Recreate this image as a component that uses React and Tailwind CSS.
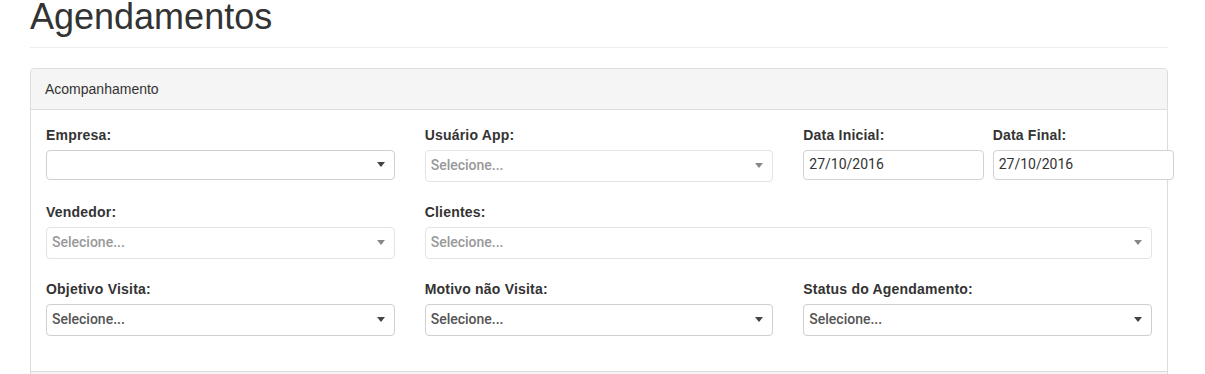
import React from "react";

const labelCls = "block mb-[5px] text-[14px] leading-[20px] font-bold tracking-[0.2px] text-[#333]";

function Caret({ light }) {
  return (
    <span
      className={
        "w-0 h-0 border-t-[5px] border-x-[4px] border-x-transparent " +
        (light ? "border-t-[#888]" : "border-t-[#444]")
      }
    />
  );
}

function Select({ placeholder, light, tall = true }) {
  return (
    <div
      className={
        "flex items-center justify-between pl-[5px] pr-[9px] bg-white border rounded-[4px] " +
        (tall ? "h-[32px] " : "h-[30px] ") +
        (light ? "border-[#e3e3e3]" : "border-[#cfcfcf]")
      }
    >
      <span
        className={
          "text-[14px] font-medium font-['Roboto',sans-serif] " +
          (light ? "text-[#999]" : "text-[#555]")
        }
      >
        {placeholder}
      </span>
      <Caret light={light} />
    </div>
  );
}

function DateInput({ value }) {
  return (
    <div className="relative z-10 flex items-center w-[181px] h-[30px] pl-[5px] bg-white border border-[#d2d2d2] rounded-[4px]">
      <span className="text-[14px] text-[#333] font-['Roboto',sans-serif]">{value}</span>
    </div>
  );
}

export default function App() {
  return (
    <div className="bg-white min-h-screen font-['Liberation_Sans',Arial,sans-serif] text-[#333]">
      <div className="ml-[30px] w-[1138px]">
        <h1 className="mt-[-3px] mb-[10px] text-[36px] leading-[1.1] font-normal text-[#333]">
          Agendamentos
        </h1>
        <hr className="border-0 border-t border-[#eee] mb-[20px]" />

        {/* Panel */}
        <div className="border border-[#ddd] rounded-[4px]">
          <div className="px-[14px] py-[10px] bg-[#f5f5f5] border-b border-[#ddd] rounded-t-[4px] text-[14px] leading-[20px]">
            Acompanhamento
          </div>

          <div className="p-[15px]">
            {/* Row 1 */}
            <div className="flex -mx-[15px]">
              <div className="w-1/3 px-[15px] mb-[20px]">
                <label className={labelCls}>Empresa:</label>
                <Select placeholder="" tall={false} />
              </div>
              <div className="w-1/3 px-[15px] mb-[20px]">
                <label className={labelCls}>Usuário App:</label>
                <Select placeholder="Selecione..." light />
              </div>
              <div className="w-1/6 px-[15px] mb-[20px]">
                <label className={labelCls}>Data Inicial:</label>
                <DateInput value="27/10/2016" />
              </div>
              <div className="w-1/6 px-[15px] mb-[20px]">
                <label className={labelCls}>Data Final:</label>
                <DateInput value="27/10/2016" />
              </div>
            </div>

            {/* Row 2 */}
            <div className="flex -mx-[15px]">
              <div className="w-1/3 px-[15px] mb-[20px]">
                <label className={labelCls}>Vendedor:</label>
                <Select placeholder="Selecione..." light />
              </div>
              <div className="w-2/3 px-[15px] mb-[20px]">
                <label className={labelCls}>Clientes:</label>
                <Select placeholder="Selecione..." light />
              </div>
            </div>

            {/* Row 3 */}
            <div className="flex -mx-[15px]">
              <div className="w-1/3 px-[15px] mb-[20px]">
                <label className={labelCls}>Objetivo Visita:</label>
                <Select placeholder="Selecione..." />
              </div>
              <div className="w-1/3 px-[15px] mb-[20px]">
                <label className={labelCls}>Motivo não Visita:</label>
                <Select placeholder="Selecione..." />
              </div>
              <div className="w-1/3 px-[15px] mb-[20px]">
                <label className={labelCls}>Status do Agendamento:</label>
                <Select placeholder="Selecione..." />
              </div>
            </div>
          </div>

          <div className="h-[40px] bg-[#f5f5f5] border-t border-[#ddd] rounded-b-[4px]" />
        </div>
      </div>
    </div>
  );
}
